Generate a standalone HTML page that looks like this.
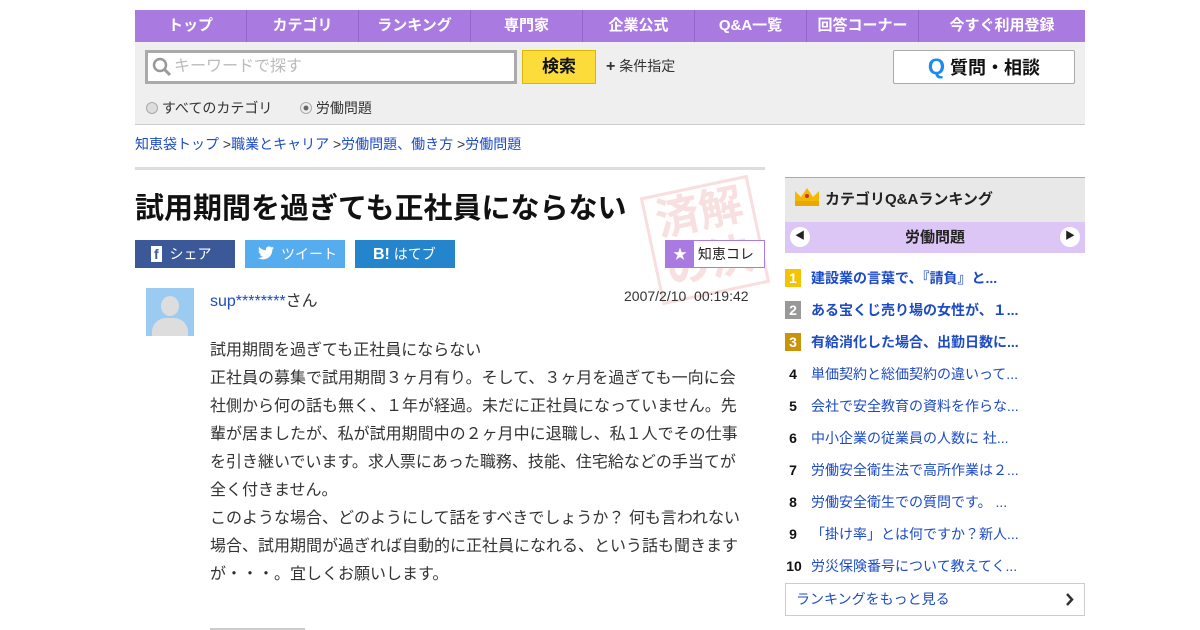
<!DOCTYPE html>
<html><head><meta charset="utf-8"><style>
*{margin:0;padding:0;box-sizing:border-box}
body{width:1200px;height:630px;overflow:hidden;background:#fff;font-family:"Liberation Sans","Noto Sans CJK JP",sans-serif;color:#333;position:relative}
.a{position:absolute}
.nav{left:135px;top:10px;width:950px;height:32px;background:#a97be0;display:flex}
.nav div{color:#fff;font-weight:bold;font-size:15px;text-align:center;line-height:32px;border-right:1px solid #9466cc;width:112px}
.nav div:last-child{border:none;flex:1}
.gray{left:135px;top:42px;width:950px;height:83px;background:#efefef;border-bottom:1px solid #ccc}
a{color:#1d4bc4;text-decoration:none}
.rank div{position:absolute;left:785px;font-size:14px;height:20px;line-height:20px}
.n{display:inline-block;width:16px;height:18px;text-align:center;color:#fff;font-weight:bold;line-height:18px;margin-right:10px;font-size:14px}
.m{display:inline-block;width:16px;text-align:center;font-weight:bold;color:#111;margin-right:10px}
</style></head><body>
<div class="a nav"><div>トップ</div><div>カテゴリ</div><div>ランキング</div><div>専門家</div><div>企業公式</div><div>Q&amp;A一覧</div><div>回答コーナー</div><div>今すぐ利用登録</div></div>
<div class="a gray"></div>
<div class="a" style="left:145px;top:50px;width:372px;height:34px;border:3px solid #aaa;background:#fff;color:#bbb;font-size:16px;line-height:28px;padding-left:26px">キーワードで探す</div>
<svg class="a" style="left:152px;top:57px" width="20" height="20"><circle cx="8" cy="8" r="6" fill="none" stroke="#999" stroke-width="2.5"/><path d="M12 12l6 6" stroke="#999" stroke-width="3"/></svg>
<div class="a" style="left:522px;top:50px;width:74px;height:34px;background:#fbdc3a;border:1px solid #d9b700;font-weight:bold;font-size:17px;text-align:center;line-height:32px;color:#111">検索</div>
<div class="a" style="left:606px;top:56px;font-size:14px;color:#333"><b style="font-size:16px">+</b> 条件指定</div>
<div class="a" style="left:893px;top:50px;width:182px;height:34px;background:#fff;border:1px solid #aaa;border-radius:2px;text-align:center;font-weight:bold;font-size:18px;line-height:32px;color:#111"><span style="color:#1a8cf0;font-size:22px">Q</span> 質問・相談</div>
<div class="a" style="left:146px;top:98px;font-size:14px;color:#333"><span style="display:inline-block;width:12px;height:12px;border:1px solid #aaa;border-radius:50%;background:#ddd;vertical-align:-1px"></span> すべてのカテゴリ</div>
<div class="a" style="left:300px;top:98px;font-size:14px;color:#333"><span style="display:inline-block;width:12px;height:12px;border:1px solid #aaa;border-radius:50%;background:radial-gradient(#666 30%,#eee 40%);vertical-align:-1px"></span> 労働問題</div>
<div class="a" style="left:135px;top:134px;font-size:14px;color:#333"><a>知恵袋トップ</a> &gt;<a>職業とキャリア</a> &gt;<a>労働問題、働き方</a> &gt;<a>労働問題</a></div>
<div class="a" style="left:135px;top:167px;width:630px;height:3px;background:#ddd"></div>
<div class="a" style="left:650px;top:185px;width:110px;height:110px;border:3px solid #f8dede;transform:rotate(-12deg);color:#f9e0e0;font-size:44px;line-height:50px;text-align:center;font-weight:bold">済解<br>の決</div>
<div class="a" style="left:135px;top:185px;font-size:29px;font-weight:bold;color:#111">試用期間を過ぎても正社員にならない</div>
<div class="a" style="left:135px;top:240px;width:100px;height:28px;background:#3b5998;color:#fff;font-size:14px;line-height:28px;padding-left:16px"><b style="background:#fff;color:#3b5998;padding:0 3px">f</b>&nbsp; シェア</div>
<div class="a" style="left:245px;top:240px;width:100px;height:28px;background:#55acee;color:#fff;font-size:14px;line-height:28px;padding-left:36px">ツイート</div>
<svg class="a" style="left:258px;top:246px" width="16" height="14" viewBox="0 0 24 20"><path d="M24 2.4c-.9.4-1.8.7-2.8.8 1-.6 1.8-1.6 2.2-2.7-1 .6-2 1-3.1 1.2C19.3.7 18 0 16.6 0c-2.7 0-4.9 2.2-4.9 4.9 0 .4 0 .8.1 1.1C7.7 5.8 4.1 3.9 1.7.9c-.4.7-.7 1.6-.7 2.5 0 1.7.9 3.2 2.2 4.1-.8 0-1.6-.2-2.2-.6v.1c0 2.4 1.7 4.4 3.9 4.8-.4.1-.8.2-1.3.2-.3 0-.6 0-.9-.1.6 2 2.4 3.4 4.6 3.4-1.7 1.3-3.8 2.1-6.1 2.1-.4 0-.8 0-1.2-.1 2.2 1.4 4.8 2.2 7.5 2.2 9.1 0 14-7.5 14-14v-.6c1-.7 1.8-1.6 2.5-2.5z" fill="#fff"/></svg>
<div class="a" style="left:355px;top:240px;width:100px;height:28px;background:#2585cc;color:#fff;font-size:14px;line-height:28px;padding-left:18px"><b style="font-size:16px">B!</b> はてブ</div>
<div class="a" style="left:665px;top:240px;width:100px;height:28px;border:1px solid #a97be0;background:#fff;font-size:14px;line-height:26px;color:#222"><span style="display:inline-block;width:28px;height:26px;background:#a97be0;color:#fff;text-align:center;vertical-align:top">★</span> 知恵コレ</div>
<div class="a" style="left:146px;top:288px;width:48px;height:48px;background:#9ccbf2;overflow:hidden"><div class="a" style="left:15px;top:8px;width:18px;height:20px;border-radius:50%;background:#ddd"></div><div class="a" style="left:6px;top:30px;width:36px;height:24px;border-radius:14px 14px 0 0;background:#ddd"></div></div>
<div class="a" style="left:210px;top:287px;font-size:16px"><a>sup********</a>さん</div>
<div class="a" style="left:624px;top:288px;font-size:14px;color:#333">2007/2/10&nbsp; 00:19:42</div>
<div class="a" style="left:210px;top:337px;width:540px;font-size:16px;line-height:28px;color:#333">試用期間を過ぎても正社員にならない<br>正社員の募集で試用期間３ヶ月有り。そして、３ヶ月を過ぎても一向に会社側から何の話も無く、１年が経過。未だに正社員になっていません。先輩が居ましたが、私が試用期間中の２ヶ月中に退職し、私１人でその仕事を引き継いでいます。求人票にあった職務、技能、住宅給などの手当てが全く付きません。<br>このような場合、どのようにして話をすべきでしょうか？ 何も言われない場合、試用期間が過ぎれば自動的に正社員になれる、という話も聞きますが・・・。宜しくお願いします。</div>
<div class="a" style="left:210px;top:628px;width:95px;height:2px;background:#ccc"></div>
<div class="a" style="left:785px;top:177px;width:300px;height:45px;background:#e8e8e8;border-top:1px solid #aaa;font-weight:bold;font-size:15px;line-height:44px;padding-left:40px;color:#222">カテゴリQ&amp;Aランキング</div>
<svg class="a" style="left:794px;top:187px" width="26" height="22"><path d="M1 4l6 6 6-9 6 9 6-6v14H1z" fill="#f5b800"/><rect x="1" y="14" width="24" height="5" fill="#e8a800"/><circle cx="13" cy="9" r="2" fill="#c33"/></svg>
<div class="a" style="left:785px;top:222px;width:300px;height:31px;background:#dcc6f6;text-align:center;font-weight:bold;font-size:15px;line-height:31px;color:#222">労働問題</div>
<div class="a" style="left:790px;top:227px;width:20px;height:20px;border-radius:50%;background:#fff;font-size:10px;text-align:center;line-height:20px;color:#222">◀</div>
<div class="a" style="left:1060px;top:227px;width:20px;height:20px;border-radius:50%;background:#fff;font-size:10px;text-align:center;line-height:20px;color:#222">▶</div>
<div class="rank">
<div style="top:268px;font-weight:bold"><span class="n" style="background:#f5c400">1</span><a>建設業の言葉で、『請負』と...</a></div>
<div style="top:300px;font-weight:bold"><span class="n" style="background:#999">2</span><a>ある宝くじ売り場の女性が、１...</a></div>
<div style="top:332px;font-weight:bold"><span class="n" style="background:#c9930a">3</span><a>有給消化した場合、出勤日数に...</a></div>
<div style="top:364px"><span class="m">4</span><a>単価契約と総価契約の違いって...</a></div>
<div style="top:396px"><span class="m">5</span><a>会社で安全教育の資料を作らな...</a></div>
<div style="top:428px"><span class="m">6</span><a>中小企業の従業員の人数に 社...</a></div>
<div style="top:460px"><span class="m">7</span><a>労働安全衛生法で高所作業は２...</a></div>
<div style="top:492px"><span class="m">8</span><a>労働安全衛生での質問です。 ...</a></div>
<div style="top:524px"><span class="m">9</span><a>「掛け率」とは何ですか？新人...</a></div>
<div style="top:556px"><span class="m" style="width:18px;margin-right:8px">10</span><a>労災保険番号について教えてく...</a></div>
</div>
<div class="a" style="left:785px;top:583px;width:300px;height:33px;border:1px solid #ccc;font-size:14px;line-height:31px;padding-left:10px"><a>ランキングをもっと見る</a></div>
<svg class="a" style="left:1065px;top:593px" width="10" height="13"><path d="M2 1l5 5.5L2 12" fill="none" stroke="#333" stroke-width="2.5"/></svg>
</body></html>
